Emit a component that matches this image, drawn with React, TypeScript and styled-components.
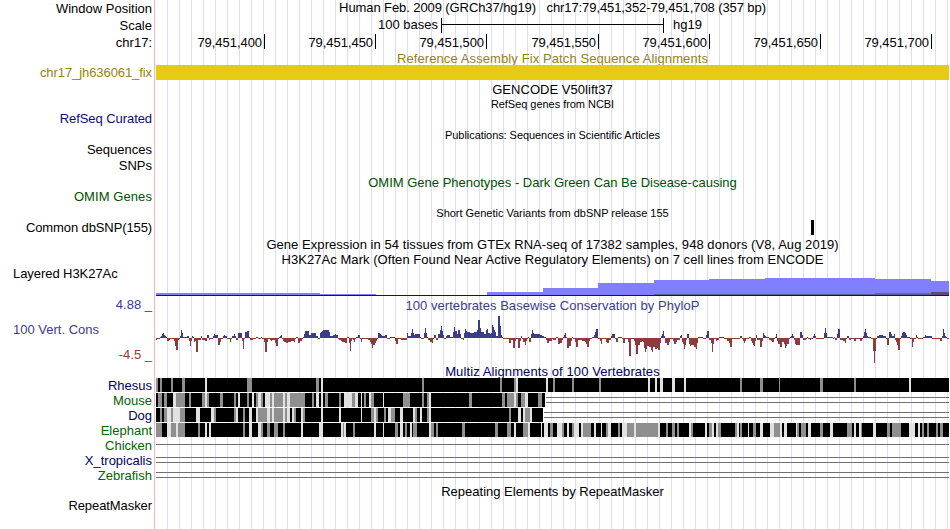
import styled, { createGlobalStyle } from 'styled-components';

const GlobalStyle = createGlobalStyle`
  body {
    margin: 0;
    background: #fff;
    overflow: hidden;
  }
`;

const Browser = styled.main`
  width: 949px;
  height: 529px;
  overflow: hidden;
  font-family: 'Liberation Sans', Arial, sans-serif;
  font-size: 13px;
  color: #000;
  background:
    linear-gradient(#ffb4b4, #ffb4b4) 154px 0 / 1px 100% no-repeat,
    repeating-linear-gradient(to right, #dcdcf8 0 1px, transparent 1px 12px) 167px 0 / 782px 100% no-repeat;
`;

const Row = styled.div<{ $h?: number; $gap?: number }>`
  display: grid;
  grid-template-columns: 156px 793px;
  height: ${(p) => p.$h ?? 15}px;
  margin-top: ${(p) => p.$gap ?? 0}px;
`;

const Label = styled.div<{ $color?: string; $left?: boolean; $space?: number; $drop?: number }>`
  height: 15px;
  line-height: 15px;
  margin-top: ${(p) => p.$drop ?? 0}px;
  padding: ${(p) => (p.$left ? '0 0 0 13px' : '0 4px 0 0')};
  text-align: ${(p) => (p.$left ? 'left' : 'right')};
  color: ${(p) => p.$color ?? '#000'};
  letter-spacing: ${(p) => p.$space ?? 0}px;
  white-space: pre;
`;

const Title = styled.div<{ $color?: string; $small?: boolean; $space?: number }>`
  grid-column: 2;
  height: 15px;
  line-height: 15px;
  text-align: center;
  font-size: ${(p) => (p.$small ? 11 : 13)}px;
  color: ${(p) => p.$color ?? '#000'};
  letter-spacing: ${(p) => p.$space ?? 0}px;
  white-space: pre;
`;

const ScaleTrack = styled.div`
  display: flex;
  align-items: flex-start;
  padding-left: 222px;
  line-height: 15px;
`;

const ScaleBar = styled.div`
  box-sizing: border-box;
  width: 223px;
  height: 15px;
  margin: 1px 9px 0 3px;
  border: solid #000;
  border-width: 0 1px;
  background: linear-gradient(#000, #000) 0 6px / 100% 1px no-repeat;
`;

const Ruler = styled.div`
  display: grid;
  grid-template-columns: 109px 111px 111px 112px 111px 111px 111px;
`;

const Tick = styled.div`
  height: 15px;
  line-height: 17px;
  padding-right: 2px;
  border-right: 1px solid #000;
  text-align: right;
  letter-spacing: -0.05px;
`;

const Patch = styled.div`
  height: 15px;
  background: #e6cb14;
`;

const Variant = styled.div`
  width: 3px;
  height: 15px;
  margin-left: 655px;
  background: #000;
`;

const Plot = styled.svg`
  display: block;
  shape-rendering: crispEdges;
`;

const LimitLabels = styled.div`
  display: flex;
  flex-direction: column;
  gap: 10px;
  padding-top: 9px;
`;

const navy = '#000064';
const green = '#006400';
const blue = '#3c3c8c';
const red = '#8c3c3c';

// x:height pairs, each level holds until the next x. x is in thirds of a pixel from the chunk start.
const conservation = [
  {
    start: -6,
    steps:
      '18:-2 22:-1 30:1 33:2 36:4 39:5 42:3 45:2 48:1 51:-3 57:-2 60:-1 72:-3 75:-8 78:-12 84:-2 87:-1 90:2 93:8 96:5 99:1 111:2 117:-3 120:-8 123:-3 126:2 129:1 132:-4 135:-3 138:-14 144:-2 153:2 156:-2 165:-3 171:3 177:-2 180:-1 189:2 192:4 195:3 204:-7 210:-4 213:-1 219:2 222:3 225:2 231:-1 240:-4 243:-1 246:2 252:4 255:2 258:-2 264:5 276:-3 279:-11 282:-1 285:6 291:7 297:1 300:-2 309:-1 318:1 324:-1 333:1 336:-1 342:-4 345:-14 351:-4 354:-1 360:-2 363:-3 366:-2 375:-5 378:-8 384:-1 387:1 390:2 393:3 396:-1 399:-3 402:-4 408:-5 414:-4 423:-3 432:-4 435:-1 438:1 444:-5 450:-3 456:-1 459:1 462:4 465:7 477:3 483:5 498:2 504:-1 510:5 513:6 516:7 519:8 537:6 540:2 549:3 555:4 558:3 564:-1 567:-2 573:-3 576:-4 585:-5 591:1 597:-5',
  },
  {
    start: 194,
    steps:
      '0:-13 3:-3 6:-1 9:-2 12:-4 15:-1 18:1 24:3 30:-1 33:-4 36:-1 54:-2 60:-4 63:-6 66:-10 69:-7 75:-5 78:-3 81:-1 84:5 90:4 93:3 96:2 105:3 111:-1 120:1 135:-3 138:-6 144:-1 153:-2 171:5 174:2 183:5 186:9 189:5 192:3 195:4 210:1 213:-1 222:5 225:10 228:5 231:1 234:-2 240:-4 246:-5 249:-1 252:3 258:-2 264:4 270:8 273:12 276:7 279:3 282:-1 288:2 291:3 300:1 309:6 312:11 315:7 321:4 324:8 330:4 333:-1 339:-2 342:5 345:9 348:7 351:6 360:5 372:6 381:8 384:18 390:10 393:6 402:4 408:8 411:9 414:5 420:4 423:5 426:13 429:11 432:8 435:6 438:2 444:22 450:12 453:3 456:1 459:-1 477:-5 483:-2 489:-10 495:-3 498:-1 504:-10 510:-3 513:2 516:-1 519:-4 525:-7 528:-3 531:-1 534:1 537:-4 543:4 546:8 549:5 552:4 570:3 576:2 582:1 588:-2 591:-5 597:-3',
  },
  {
    start: 394,
    steps:
      '0:-3 5:-1 9:-2 18:1 24:-6 30:-5 36:-2 39:1 42:3 45:5 48:1 51:-10 57:-8 63:-3 66:1 69:-1 75:-4 78:-9 84:-2 96:-3 105:-4 108:-6 111:-9 117:-3 120:-1 126:1 132:3 135:6 138:9 144:-1 150:-3 153:-6 156:-1 168:-4 171:-5 177:-2 183:2 186:4 195:-1 198:-4 204:1 216:-1 219:-5 225:-1 234:-4 237:-18 243:-1 252:-3 255:-7 258:-16 264:-7 270:-4 276:-3 279:-4 282:-10 285:-14 288:-11 291:-8 297:-9 303:-12 306:-14 309:-9 315:-11 321:-10 324:-12 330:-5 333:2 336:4 339:7 342:2 345:-5 351:-7 357:-4 360:-1 369:-3 372:-6 378:-4 381:-2 390:2 393:3 396:-4 399:-6 402:-11 405:-7 408:-2 411:4 417:-6 420:-8 423:-7 432:-9 438:-11 441:-5 444:1 459:-1 468:3 471:7 477:-2 483:-5 486:-14 489:-6 492:-1 498:-3 501:-2 507:1 522:-1 531:-3 537:-5 540:-9 546:-1 570:2 576:-1 579:-3 582:-5 585:-3 588:-1 597:1',
  },
  {
    start: 594,
    steps:
      '0:1 3:-3 6:-5 9:-7 12:-8 15:-3 18:3 21:-2 30:-9 36:-3 39:5 42:3 45:2 48:1 57:-2 63:-3 66:-4 72:-1 75:1 78:4 81:-3 84:-6 90:-9 96:-4 102:-6 105:-10 108:-8 111:-6 117:-1 120:1 123:2 126:4 129:2 132:-2 135:-6 138:-7 150:6 156:3 159:-2 168:-1 171:1 174:-1 180:-2 183:-1 189:2 192:4 195:2 198:-1 222:5 225:10 228:5 231:1 249:-1 252:1 255:-2 261:4 264:9 270:-2 279:-3 285:-5 288:-1 291:2 297:-2 303:-1 312:-3 318:-1 330:-3 336:-1 339:2 342:6 345:9 348:5 351:2 354:1 363:-1 369:-13 372:-24 375:-13 378:-1 381:2 387:3 399:2 408:-1 411:-7 417:6 423:4 426:2 432:4 435:-2 438:-4 441:-7 444:-12 450:-1 453:2 456:5 459:6 465:5 468:3 471:1 480:-1 486:-9 489:-4 492:-1 498:3 501:1 504:-1 519:1 525:3 528:2 546:-1 570:-3 576:2 579:9 582:5 585:2 588:1 591:-1 597:0',
  },
];

const levels = conservation.flatMap(({ start, steps }) =>
  steps.split(' ').map((s) => {
    const [x, v] = s.split(':').map(Number);
    return { x: start + Math.round(x / 3), v };
  }),
);

// Shaded columns of the alignment bars: g = partial match, l = weak match, everything else is black.
const species = [
  {
    name: 'Rhesus',
    color: navy,
    end: 793,
    cols: [
      'g18-24 g30-36 g63-69 g96-105 l165-171 g291-306 g498-507 l513-519',
      'g216-222 g450-456 g492-497 l497-504 l588-594',
      'g39-45 g96-102 g177-183 l324-330 l345-351 l360-369 l396-405 l432-438 g600-606',
      'g60-69 g117-120 g240-249 g342-348 l507-513',
    ],
    lines: [],
  },
  {
    name: 'Mouse',
    color: green,
    end: 389,
    cols: [
      'g24-36 g42-51 l69-78 g78-105 g117-123 g156-165 l165-171 g171-177 g210-219 g252-258 l264-270 g291-297 l306-312 g318-324 l324-333 g333-339 l345-360 g360-366 l366-372 g372-399 l399-405 g405-411 l411-420 g420-465 g486-492 l498-507 l513-519 g525-534 g567-573 l582-600',
      'l0-6 g6-15 l15-24 l33-36 g42-48 l57-63 g63-72 l99-102 g159-180 g216-222 g231-237 l237-243 g357-366 g456-465 g471-492 l492-498 g498-504 g513-525 l525-534 g564-576',
      '',
      '',
    ],
    lines: [4, 9],
  },
  {
    name: 'Dog',
    color: navy,
    end: 387,
    cols: [
      'g30-36 g42-51 l51-63 g63-69 l69-90 g90-105 l138-150 l183-192 g192-198 g252-258 l258-264 g279-285 l297-306 l318-324 g324-351 l351-360 g360-366 l366-372 g372-399 l399-405 g405-411 l411-420 l426-432 g432-438 l453-459 g459-465 l513-519 l567-573',
      'l33-36 g63-72 l72-78 g78-84 g102-108 l114-123 g123-135 l150-159 l189-195 g195-201 l210-216 g231-237 l237-243 g477-483 l504-513 l519-525 g525-540 l540-546',
      '',
      '',
    ],
    lines: [4, 9],
  },
  {
    name: 'Elephant',
    color: green,
    end: 793,
    cols: [
      'g18-36 l51-63 g63-78 l78-84 g84-105 g144-150 l165-171 l177-183 g279-285 l297-306 l324-333 g333-339 g351-360 g372-384 g399-405 l453-459 l507-519 l573-579 g579-582 l582-588',
      'g9-15 l72-78 l99-102 g135-144 l150-159 g165-171 l180-186 g189-201 l237-243 g243-252 g258-264 g336-345 g435-444 g471-483 l492-498 g519-534 l534-540 l573-576 l582-594',
      'l12-24 g30-39 l51-66 g66-72 l81-87 g96-102 l102-117 l123-129 g129-153 l162-168 l183-186 g198-204 l204-213 g234-240 l246-261 g261-282 l282-288 g288-354 l354-360 g378-384 g396-405 g411-417 l447-453 g453-459 l495-501 g507-516 l516-522 l528-534 g534-543 g585-591 l591-597 g600-606',
      'l24-27 g39-48 l60-69 l90-102 g102-120 l120-126 l132-141 l168-171 g171-177 g183-198 l204-213 g240-249 l270-279 g321-336 l342-348 l357-363 g363-366 l399-408 g441-450 g456-483 l507-525 l534-540 g546-552 g561-567 g588-594 g600-609',
    ],
    lines: [],
  },
  { name: 'Chicken', color: green, end: 0, cols: [], lines: [6] },
  { name: 'X_tropicalis', color: navy, end: 0, cols: [], lines: [4, 9] },
  { name: 'Zebrafish', color: green, end: 0, cols: [], lines: [4, 9] },
];

const chunkStarts = [-6, 194, 384, 584];

const AlignmentPlot = ({ end, cols, lines }: { end: number; cols: string[]; lines: number[] }) => (
  <Plot width="793" height="15">
    {end > 0 && <rect x="0" y="0" width={end} height="14" fill="#000" />}
    {cols.flatMap((chunk, i) =>
      chunk
        .split(' ')
        .filter(Boolean)
        .map((c) => {
          const [from, to] = c.slice(1).split('-').map((n) => chunkStarts[i] + Math.round(Number(n) / 3));
          return (
            <rect
              key={`${i}${c}`}
              x={from}
              y="0"
              width={to - from}
              height="14"
              fill={c[0] === 'g' ? '#8f8f8f' : '#e1e1e1'}
            />
          );
        }),
    )}
    {lines.map((y) => (
      <rect key={y} x={end ? end + 1 : 0} y={y} width={793} height="1" fill="#707070" />
    ))}
  </Plot>
);

const histone = [
  [0, 2], [164, 1], [220, 0], [331, 3], [387, 7], [442, 12], [498, 15], [553, 16], [609, 17], [719, 16], [775, 14], [793, 0],
];

const App = () => {
  return (
    <>
      <GlobalStyle />
      <Browser>
        <Row $h={17}>
          <Label $drop={1}>Window Position</Label>
          <Title $space={-0.09}>{'Human Feb. 2009 (GRCh37/hg19)   chr17:79,451,352-79,451,708 (357 bp)'}</Title>
        </Row>
        <Row>
          <Label $drop={1}>Scale</Label>
          <ScaleTrack>
            <span>100 bases</span>
            <ScaleBar />
            <span>hg19</span>
          </ScaleTrack>
        </Row>
        <Row $gap={2}>
          <Label $drop={1}>chr17:</Label>
          <Ruler>
            {[400, 450, 500, 550, 600, 650, 700].map((pos) => (
              <Tick key={pos}>79,451,{pos}</Tick>
            ))}
          </Ruler>
        </Row>
        <Row $gap={2} $h={14}>
          <Title $color="#968214" $space={0.1}>
            Reference Assembly Fix Patch Sequence Alignments
          </Title>
        </Row>
        <Row>
          <Label $color="#968214" $space={-0.08}>
            chr17_jh636061_fix
          </Label>
          <Patch />
        </Row>
        <Row $gap={2}>
          <Title $space={0.04}>GENCODE V50lift37</Title>
        </Row>
        <Row $h={14}>
          <Title $small $space={-0.04}>
            RefSeq genes from NCBI
          </Title>
        </Row>
        <Row $h={16}>
          <Label $color="#0c0c78" $space={-0.07}>
            RefSeq Curated
          </Label>
        </Row>
        <Row $gap={1} $h={14}>
          <Title $small $space={-0.06}>
            Publications: Sequences in Scientific Articles
          </Title>
        </Row>
        <Row $h={16}>
          <Label>Sequences</Label>
        </Row>
        <Row>
          <Label>SNPs</Label>
        </Row>
        <Row $gap={2}>
          <Title $color="#005000">OMIM Gene Phenotypes - Dark Green Can Be Disease-causing</Title>
        </Row>
        <Row $gap={-1}>
          <Label $color="#005000" $space={0.08}>
            OMIM Genes
          </Label>
        </Row>
        <Row $gap={2} $h={14}>
          <Title $small $space={-0.02}>
            Short Genetic Variants from dbSNP release 155
          </Title>
        </Row>
        <Row>
          <Label $space={-0.11}>Common dbSNP(155)</Label>
          <Variant />
        </Row>
        <Row $gap={2}>
          <Title $space={0.055}>
            Gene Expression in 54 tissues from GTEx RNA-seq of 17382 samples, 948 donors (V8, Aug 2019)
          </Title>
        </Row>
        <Row $h={14}>
          <Title $space={0.05}>
            H3K27Ac Mark (Often Found Near Active Regulatory Elements) on 7 cell lines from ENCODE
          </Title>
        </Row>
        <Row $h={30}>
          <Label $left $space={-0.06}>
            Layered H3K27Ac
          </Label>
          <Plot width="793" height="30">
            {histone.slice(0, -1).map(([x, h], i) => (
              <rect key={x} x={x} y={29 - h} width={histone[i + 1][0] - x} height={h} fill="#8080ff" />
            ))}
            {/* weaker cell lines stay just above the axis */}
            <rect x="498" y="28" width="277" height="1" fill="#50649b" />
            <rect x="719" y="27" width="56" height="1" fill="#6464b4" />
            <rect x="775" y="26" width="18" height="3" fill="#644678" />
            <rect x="0" y="29" width="793" height="1" fill="#141450" />
          </Plot>
        </Row>
        <Row $gap={2}>
          <Label $color={blue} $drop={-1}>
            4.88 _
          </Label>
          <Title $color={blue} $space={0.04}>
            100 vertebrates Basewise Conservation by PhyloP
          </Title>
        </Row>
        <Row $h={50}>
          <LimitLabels>
            <Label $left $color={blue}>
              100 Vert. Cons
            </Label>
            <Label $color={red}>-4.5 _</Label>
          </LimitLabels>
          <Plot width="793" height="50">
            {levels.slice(0, -1).map(({ x, v }, i) => (
              <rect
                key={i}
                x={x}
                y={v > 0 ? 25 - v : 25}
                width={Math.max(0, levels[i + 1].x - x)}
                height={Math.abs(v)}
                fill={v > 0 ? blue : red}
              />
            ))}
            <rect x="718" y="48" width="1" height="2" fill="#ff00ff" />
          </Plot>
        </Row>
        <Row $gap={1} $h={14}>
          <Title $color={navy} $space={0.1}>
            Multiz Alignments of 100 Vertebrates
          </Title>
        </Row>
        {species.map(({ name, color, end, cols, lines }) => (
          <Row key={name}>
            <Label $color={color}>{name}</Label>
            <AlignmentPlot end={end} cols={cols} lines={lines} />
          </Row>
        ))}
        <Row $gap={1}>
          <Title>Repeating Elements by RepeatMasker</Title>
        </Row>
        <Row $gap={-1}>
          <Label $space={-0.08}>RepeatMasker</Label>
        </Row>
      </Browser>
    </>
  );
};

export default App;
